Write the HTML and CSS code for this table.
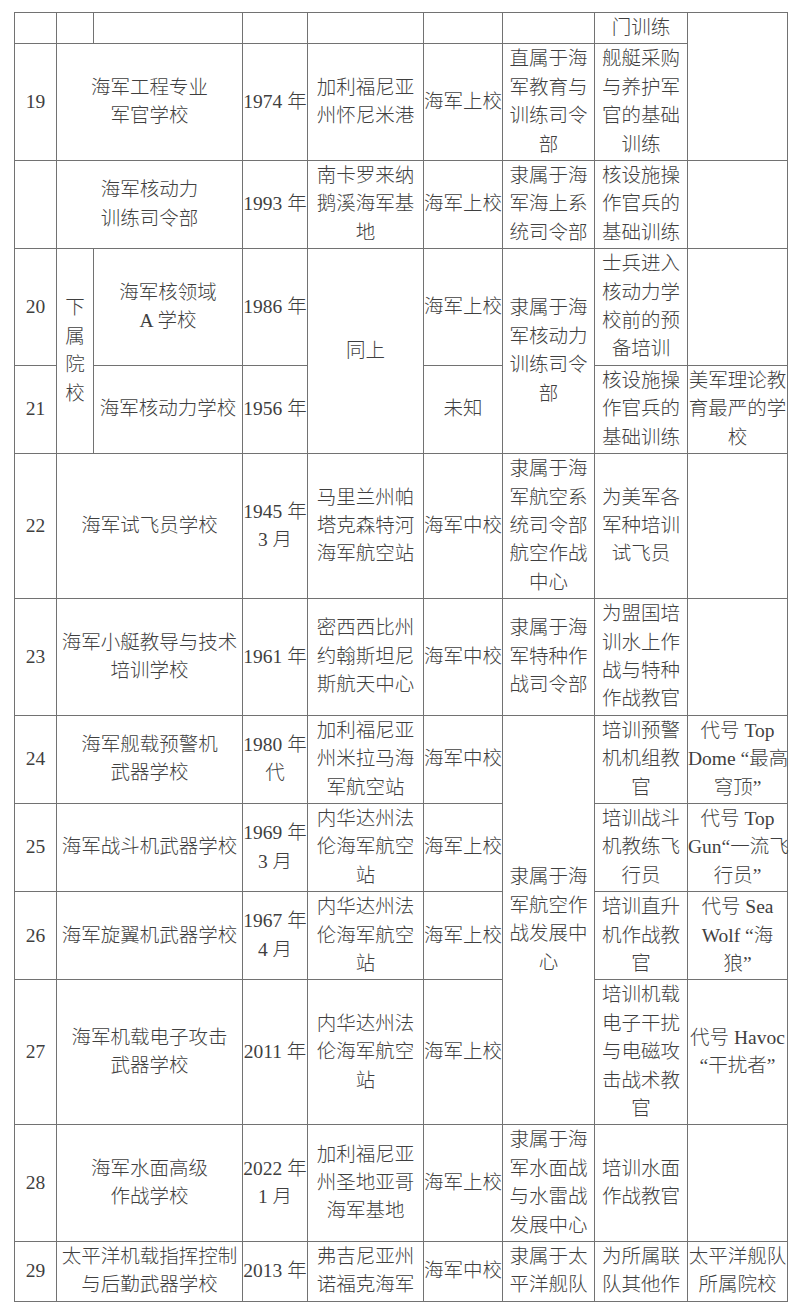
FILE: index.html
```html
<!DOCTYPE html>
<html lang="zh-CN">
<head>
<meta charset="utf-8">
<title>海军院校表</title>
<link rel="stylesheet" href="styles.css">
</head>
<body>
<table class="grid">
  <colgroup>
    <col class="c-no"><col class="c-sub"><col class="c-name"><col class="c-year"><col class="c-loc"><col class="c-rank"><col class="c-org"><col class="c-task"><col class="c-note">
  </colgroup>
  <tbody>
    <tr>
      <td></td><td></td><td></td><td></td><td></td><td></td><td></td><td>门训练</td><td rowspan="2"></td>
    </tr>
    <tr>
      <td>19</td>
      <td colspan="2">海军工程专业<br>军官学校</td>
      <td>1974 年</td>
      <td>加利福尼亚<br>州怀尼米港</td>
      <td>海军上校</td>
      <td>直属于海<br>军教育与<br>训练司令<br>部</td>
      <td>舰艇采购<br>与养护军<br>官的基础<br>训练</td>
    </tr>
    <tr>
      <td></td>
      <td colspan="2">海军核动力<br>训练司令部</td>
      <td>1993 年</td>
      <td>南卡罗来纳<br>鹅溪海军基<br>地</td>
      <td>海军上校</td>
      <td>隶属于海<br>军海上系<br>统司令部</td>
      <td>核设施操<br>作官兵的<br>基础训练</td>
      <td></td>
    </tr>
    <tr>
      <td>20</td>
      <td rowspan="2">下<br>属<br>院<br>校</td>
      <td>海军核领域<br>A 学校</td>
      <td>1986 年</td>
      <td rowspan="2">同上</td>
      <td>海军上校</td>
      <td rowspan="2">隶属于海<br>军核动力<br>训练司令<br>部</td>
      <td>士兵进入<br>核动力学<br>校前的预<br>备培训</td>
      <td></td>
    </tr>
    <tr>
      <td>21</td>
      <td>海军核动力学校</td>
      <td>1956 年</td>
      <td>未知</td>
      <td>核设施操<br>作官兵的<br>基础训练</td>
      <td>美军理论教<br>育最严的学<br>校</td>
    </tr>
    <tr>
      <td>22</td>
      <td colspan="2">海军试飞员学校</td>
      <td>1945 年<br>3 月</td>
      <td>马里兰州帕<br>塔克森特河<br>海军航空站</td>
      <td>海军中校</td>
      <td>隶属于海<br>军航空系<br>统司令部<br>航空作战<br>中心</td>
      <td>为美军各<br>军种培训<br>试飞员</td>
      <td></td>
    </tr>
    <tr>
      <td>23</td>
      <td colspan="2">海军小艇教导与技术<br>培训学校</td>
      <td>1961 年</td>
      <td>密西西比州<br>约翰斯坦尼<br>斯航天中心</td>
      <td>海军中校</td>
      <td>隶属于海<br>军特种作<br>战司令部</td>
      <td>为盟国培<br>训水上作<br>战与特种<br>作战教官</td>
      <td></td>
    </tr>
    <tr>
      <td>24</td>
      <td colspan="2">海军舰载预警机<br>武器学校</td>
      <td>1980 年<br>代</td>
      <td>加利福尼亚<br>州米拉马海<br>军航空站</td>
      <td>海军中校</td>
      <td rowspan="4">隶属于海<br>军航空作<br>战发展中<br>心</td>
      <td>培训预警<br>机机组教<br>官</td>
      <td>代号 Top<br>Dome “最高<br>穹顶”</td>
    </tr>
    <tr>
      <td>25</td>
      <td colspan="2">海军战斗机武器学校</td>
      <td>1969 年<br>3 月</td>
      <td>内华达州法<br>伦海军航空<br>站</td>
      <td>海军上校</td>
      <td>培训战斗<br>机教练飞<br>行员</td>
      <td>代号 Top<br>Gun“一流飞<br>行员”</td>
    </tr>
    <tr>
      <td>26</td>
      <td colspan="2">海军旋翼机武器学校</td>
      <td>1967 年<br>4 月</td>
      <td>内华达州法<br>伦海军航空<br>站</td>
      <td>海军上校</td>
      <td>培训直升<br>机作战教<br>官</td>
      <td>代号 Sea<br>Wolf “海<br>狼”</td>
    </tr>
    <tr>
      <td>27</td>
      <td colspan="2">海军机载电子攻击<br>武器学校</td>
      <td>2011 年</td>
      <td>内华达州法<br>伦海军航空<br>站</td>
      <td>海军上校</td>
      <td>培训机载<br>电子干扰<br>与电磁攻<br>击战术教<br>官</td>
      <td>代号 Havoc<br>“干扰者”</td>
    </tr>
    <tr>
      <td>28</td>
      <td colspan="2">海军水面高级<br>作战学校</td>
      <td>2022 年<br>1 月</td>
      <td>加利福尼亚<br>州圣地亚哥<br>海军基地</td>
      <td>海军上校</td>
      <td>隶属于海<br>军水面战<br>与水雷战<br>发展中心</td>
      <td>培训水面<br>作战教官</td>
      <td></td>
    </tr>
    <tr>
      <td>29</td>
      <td colspan="2">太平洋机载指挥控制<br>与后勤武器学校</td>
      <td>2013 年</td>
      <td>弗吉尼亚州<br>诺福克海军</td>
      <td>海军中校</td>
      <td>隶属于太<br>平洋舰队</td>
      <td>为所属联<br>队其他作</td>
      <td>太平洋舰队<br>所属院校</td>
    </tr>
  </tbody>
</table>
</body>
</html>
```

FILE: styles.css
```css
html, body {
  margin: 0;
  padding: 0;
  background: #ffffff;
}

body {
  padding: 12px 0 0 14px;
  font-family: "Liberation Serif", "Noto Sans CJK SC", serif;
  font-size: 19.5px;
  color: #3f3f3f;
}

.grid {
  border-collapse: collapse;
  table-layout: fixed;
  width: 774px;
}

.c-no { width: 42px; }
.c-sub { width: 37px; }
.c-name { width: 149px; }
.c-year { width: 65px; }
.c-loc { width: 116px; }
.c-rank { width: 79px; }
.c-org { width: 92px; }
.c-task { width: 93px; }
.c-note { width: 100px; }

.grid td {
  border: 1px solid #727272;
  padding: 1px 0;
  text-align: center;
  vertical-align: middle;
  line-height: 28.4px;
  white-space: nowrap;
  overflow: visible;
  font-weight: 300;
}
```
